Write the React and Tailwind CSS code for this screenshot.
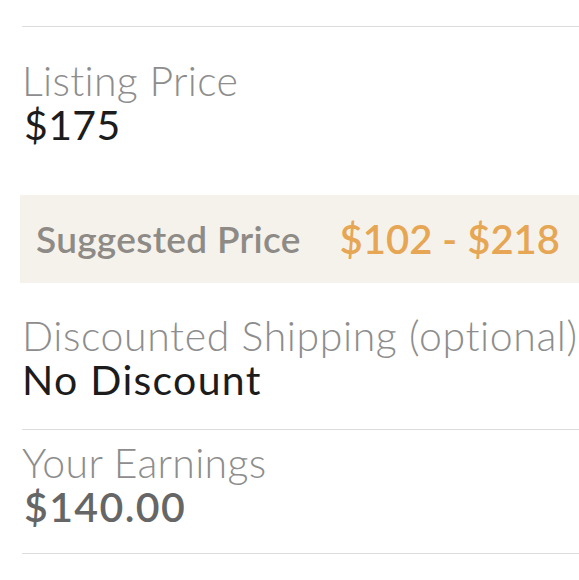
export default function App() {
  const font = { fontFamily: 'Lato, "Open Sans", sans-serif' }
  return (
    <main className="min-h-screen bg-white overflow-hidden" style={font}>
      <div className="pt-[26px] pl-[22px]">
        <div className="border-t border-[#dcdcdc] h-[147px] pt-[33px]">
          <div className="text-[41px] leading-[41px] font-light tracking-[0.3px] text-[#8d8d8d] whitespace-nowrap">Listing Price</div>
          <div className="text-[41px] leading-[41px] mt-[3px] pl-[2px] tracking-[0.4px] text-[#1c1c1c] whitespace-nowrap">$175</div>
        </div>

        <div className="mt-[22px] -ml-[2px] h-[88px] bg-[#f5f2ec] flex items-center justify-between pl-[16px] pr-[19px] whitespace-nowrap">
          <span className="text-[37px] font-semibold tracking-[0.3px] text-[#8e8b86]">Suggested Price</span>
          <span className="text-[40px] font-semibold text-[#e6a654]">$102 - $218</span>
        </div>

        <div className="h-[146px] pt-[32px]">
          <div className="text-[41px] leading-[41px] font-light tracking-[0.6px] text-[#8d8d8d] whitespace-nowrap">Discounted Shipping (optional)</div>
          <div className="text-[41px] leading-[41px] mt-[3px] tracking-[1.3px] text-[#1c1c1c] whitespace-nowrap">No Discount</div>
        </div>

        <div className="border-t border-b border-[#dcdcdc] h-[125px] pt-[12px]">
          <div className="text-[41px] leading-[41px] font-light tracking-[0.3px] text-[#8d8d8d] whitespace-nowrap">Your Earnings</div>
          <div className="text-[41px] leading-[41px] mt-[3px] pl-[2px] font-semibold tracking-[1.4px] text-[#666666] whitespace-nowrap">$140.00</div>
        </div>
      </div>
    </main>
  )
}
